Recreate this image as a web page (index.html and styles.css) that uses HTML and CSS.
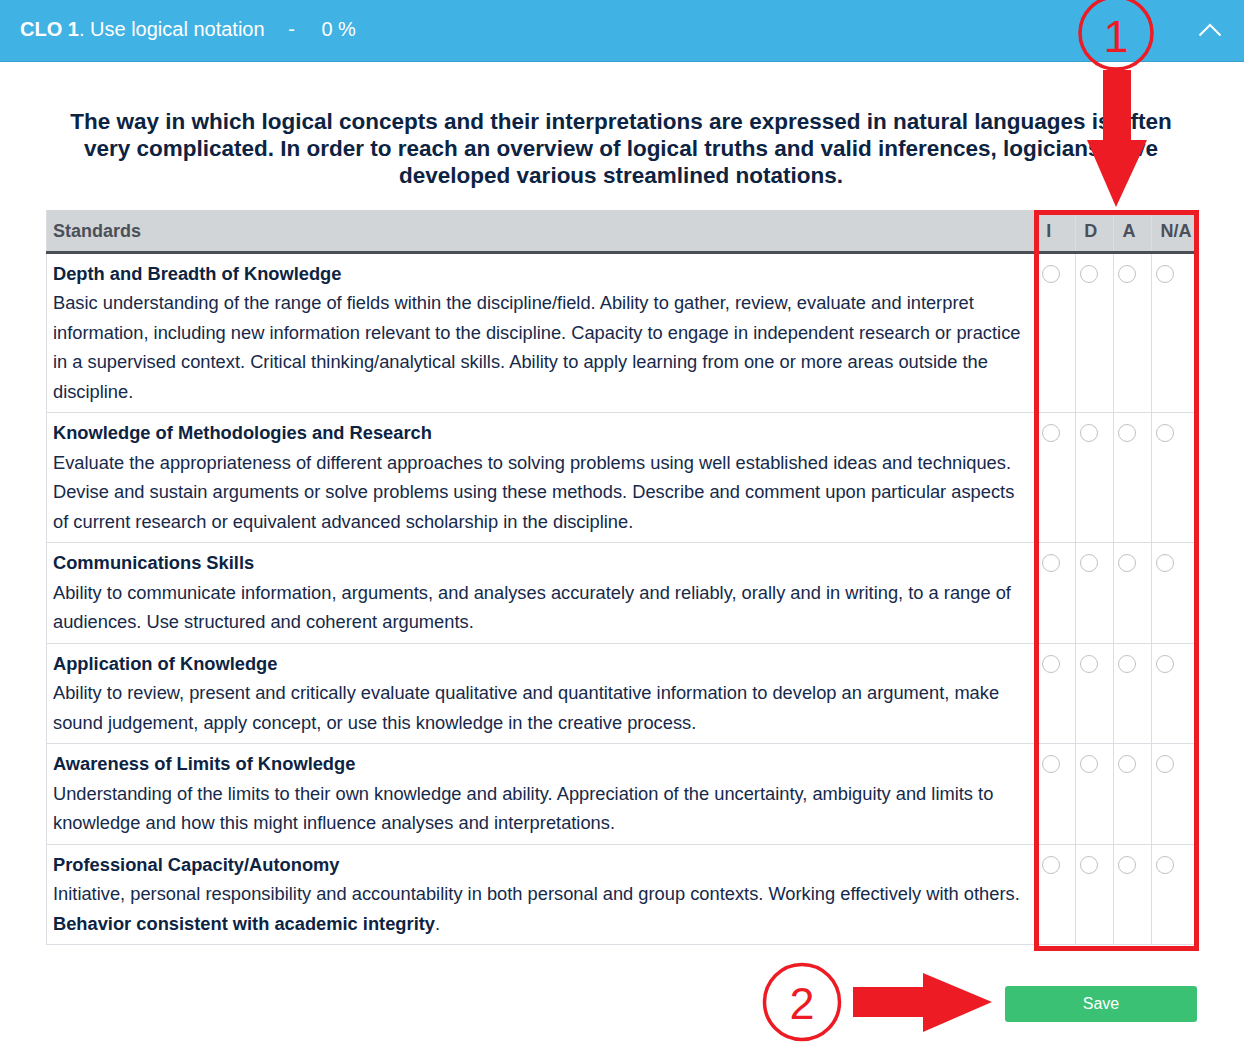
FILE: index.html
```html
<!DOCTYPE html>
<html>
<head>
<meta charset="utf-8">
<link rel="stylesheet" href="styles.css">
</head>
<body>
<div class="topbar">
  <div class="topbar-title"><b>CLO 1</b>. Use logical notation <span class="sep">-</span> <span class="pct">0 %</span></div>
  <svg class="chev" width="24" height="14" viewBox="0 0 24 14"><polyline points="1.5,12.5 12,2 22.5,12.5" fill="none" stroke="#fff" stroke-width="2"/></svg>
</div>
<main class="content">
  <h1 class="intro">The way in which logical concepts and their interpretations are expressed in natural languages is often very complicated. In order to reach an overview of logical truths and valid inferences, logicians have developed various streamlined notations.</h1>
  <table class="grid">
    <thead>
      <tr><th class="std">Standards</th><th class="opt">I</th><th class="opt">D</th><th class="opt">A</th><th class="opt na">N/A</th></tr>
    </thead>
    <tbody>
      <tr>
        <td class="std"><div class="t">Depth and Breadth of Knowledge</div><div class="d">Basic understanding of the range of fields within the discipline/field. Ability to gather, review, evaluate and interpret information, including new information relevant to the discipline. Capacity to engage in independent research or practice in a supervised context. Critical thinking/analytical skills. Ability to apply learning from one or more areas outside the discipline.</div></td>
        <td class="opt"><input type="radio" name="r1"></td><td class="opt"><input type="radio" name="r1"></td><td class="opt"><input type="radio" name="r1"></td><td class="opt"><input type="radio" name="r1"></td>
      </tr>
      <tr>
        <td class="std"><div class="t">Knowledge of Methodologies and Research</div><div class="d">Evaluate the appropriateness of different approaches to solving problems using well established ideas and techniques. Devise and sustain arguments or solve problems using these methods. Describe and comment upon particular aspects of current research or equivalent advanced scholarship in the discipline.</div></td>
        <td class="opt"><input type="radio" name="r2"></td><td class="opt"><input type="radio" name="r2"></td><td class="opt"><input type="radio" name="r2"></td><td class="opt"><input type="radio" name="r2"></td>
      </tr>
      <tr>
        <td class="std"><div class="t">Communications Skills</div><div class="d">Ability to communicate information, arguments, and analyses accurately and reliably, orally and in writing, to a range of audiences. Use structured and coherent arguments.</div></td>
        <td class="opt"><input type="radio" name="r3"></td><td class="opt"><input type="radio" name="r3"></td><td class="opt"><input type="radio" name="r3"></td><td class="opt"><input type="radio" name="r3"></td>
      </tr>
      <tr>
        <td class="std"><div class="t">Application of Knowledge</div><div class="d">Ability to review, present and critically evaluate qualitative and quantitative information to develop an argument, make sound judgement, apply concept, or use this knowledge in the creative process.</div></td>
        <td class="opt"><input type="radio" name="r4"></td><td class="opt"><input type="radio" name="r4"></td><td class="opt"><input type="radio" name="r4"></td><td class="opt"><input type="radio" name="r4"></td>
      </tr>
      <tr>
        <td class="std"><div class="t">Awareness of Limits of Knowledge</div><div class="d">Understanding of the limits to their own knowledge and ability. Appreciation of the uncertainty, ambiguity and limits to knowledge and how this might influence analyses and interpretations.</div></td>
        <td class="opt"><input type="radio" name="r5"></td><td class="opt"><input type="radio" name="r5"></td><td class="opt"><input type="radio" name="r5"></td><td class="opt"><input type="radio" name="r5"></td>
      </tr>
      <tr>
        <td class="std"><div class="t">Professional Capacity/Autonomy</div><div class="d">Initiative, personal responsibility and accountability in both personal and group contexts. Working effectively with others. <b>Behavior consistent with academic integrity</b>.</div></td>
        <td class="opt"><input type="radio" name="r6"></td><td class="opt"><input type="radio" name="r6"></td><td class="opt"><input type="radio" name="r6"></td><td class="opt"><input type="radio" name="r6"></td>
      </tr>
    </tbody>
  </table>
  <div class="actions"><button class="save">Save</button></div>
</main>
<svg class="annot" width="1244" height="1054" viewBox="0 0 1244 1054">
  <circle cx="1116" cy="33" r="36" fill="none" stroke="#ed1c24" stroke-width="3.5"/>
  <text x="1116" y="52" text-anchor="middle" font-family="Liberation Sans, Arial, sans-serif" font-size="45" fill="#ed1c24">1</text>
  <polygon points="1103,70 1131,70 1131,140 1147,140 1116,207 1087,140 1103,140" fill="#ed1c24"/>
  <rect x="1036.5" y="212.5" width="160" height="736" fill="none" stroke="#ed1c24" stroke-width="5"/>
  <circle cx="802" cy="1002" r="37.5" fill="none" stroke="#ed1c24" stroke-width="3.5"/>
  <text x="802" y="1019" text-anchor="middle" font-family="Liberation Sans, Arial, sans-serif" font-size="45" fill="#ed1c24">2</text>
  <polygon points="853,987 923,987 923,973 992,1002 923,1032 923,1017 853,1017" fill="#ed1c24"/>
</svg>
</body>
</html>
```
FILE: styles.css
```css
* { box-sizing: border-box; }
html, body { margin: 0; padding: 0; background: #fff; }
body {
  font-family: "Liberation Sans", Arial, sans-serif;
  color: #13294a;
  position: relative;
  width: 1244px;
  min-height: 1054px;
}
.topbar {
  height: 62px;
  background: #41b2e4;
  border-bottom: 1px solid #3a9fcf;
  display: flex;
  align-items: center;
  justify-content: space-between;
  padding: 0 22px 2px 20px;
  color: #fff;
}
.topbar-title { font-size: 20px; white-space: pre; }
.topbar-title .sep { margin: 0 12px 0 18px; }
.topbar-title .pct { margin-left: 9px; }
.chev { display: block; }
.content { padding: 0 48px 0 46px; }
.intro {
  margin: 46px 0 21px;
  text-align: center;
  font-size: 22.5px;
  line-height: 27px;
  font-weight: bold;
  color: #0d2342;
  padding: 0 18px;
}
.grid {
  width: 1150px;
  border-collapse: collapse;
  table-layout: fixed;
  border-left: 1px solid #dcdde2;
  border-bottom: 1px solid #dcdde2;
}
.grid thead th {
  background: #d1d5d8;
  color: #4b5058;
  font-size: 18px;
  font-weight: bold;
  text-align: left;
  height: 42px;
  padding: 2px 0 0 6px;
  border-bottom: 3px solid #4a4e55;
}
.grid thead th.opt { padding-left: 8px; border-left: 1px solid #dcdde2; }
.grid th.std { width: 990px; }
.grid th.opt { width: 38px; }
.grid th.na { width: 44px; padding-left: 6px; }
.grid tbody td { border-top: 1px solid #dcdde2; vertical-align: top; }
.grid td.std { padding: 5px 8px 6px 6px; }
.grid td.opt { border-left: 1px solid #dcdde2; padding: 11px 0 0 4px; }
.t { font-size: 18.3px; font-weight: bold; line-height: 29.5px; color: #0d2342; }
.d { font-size: 18.3px; line-height: 29.5px; color: #16294a; }
.d b { color: #0d2342; }
input[type=radio] {
  -webkit-appearance: none;
  appearance: none;
  width: 18px;
  height: 18px;
  margin: 0;
  border: 1px solid #c2c2c2;
  border-radius: 50%;
  background: #fff;
  display: block;
}
.actions { display: flex; justify-content: flex-end; margin-top: 41px; }
.save {
  width: 192px;
  height: 36px;
  border: none;
  border-radius: 3px;
  background: #3bc174;
  color: #fff;
  font-family: "Liberation Sans", Arial, sans-serif;
  font-size: 16px;
  margin-right: -1px;
}
.annot { position: absolute; left: 0; top: 0; pointer-events: none; }
```
